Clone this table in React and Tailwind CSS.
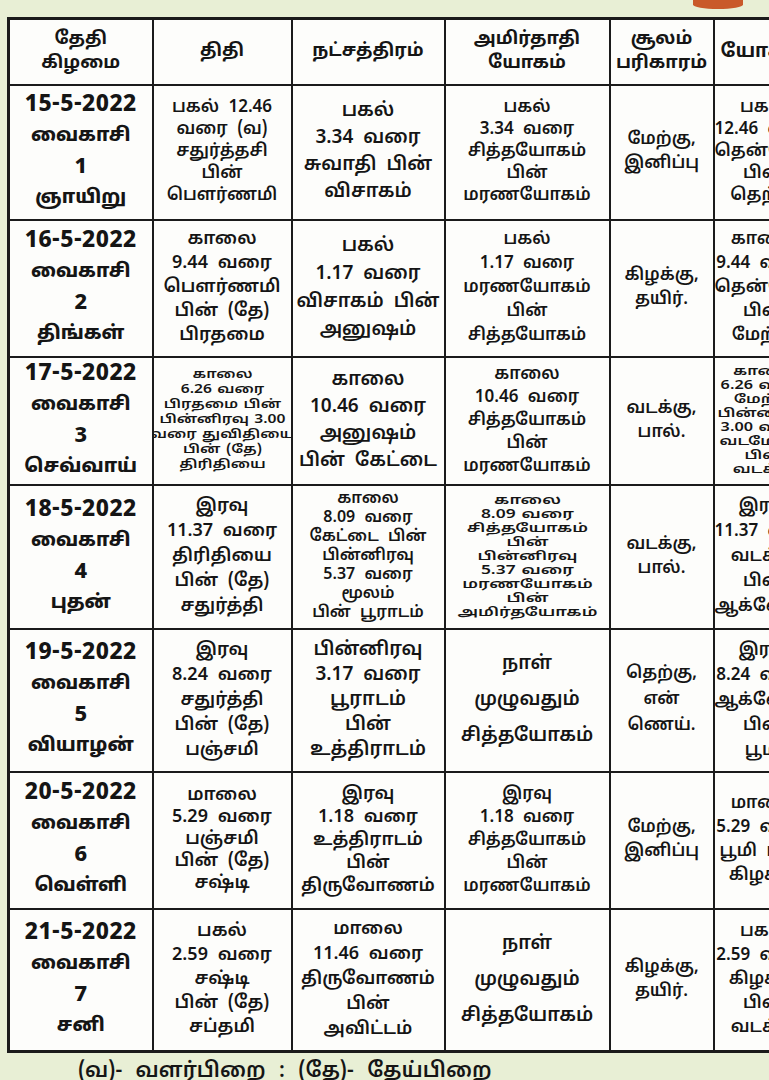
import React from "react";

const font = {
  fontFamily: '"Noto Sans Tamil", "Lohit Tamil", "Liberation Sans Narrow", "Liberation Sans", sans-serif',
};

// each cell: [lines, size class, stretch class]
const rows = [
  {
    h: "h-[135px]",
    date: ["15-5-2022", "வைகாசி", "1", "ஞாயிறு"],
    cells: [
      [["பகல் 12.46", "வரை (வ)", "சதுர்த்தசி", "பின்", "பௌர்ணமி"], "text-[17px] leading-[22px]"],
      [["பகல்", "3.34 வரை", "சுவாதி பின்", "விசாகம்"], "text-[19px] leading-[27px]"],
      [["பகல்", "3.34 வரை", "சித்தயோகம்", "பின்", "மரணயோகம்"], "text-[17px] leading-[22px]"],
      [["மேற்கு,", "இனிப்பு"], "text-[17px] leading-[24px]"],
      [["பகல்", "12.46 வரை", "தென்மேற்கு", "பின்", "தெற்கு"], "text-[17px] leading-[22px]"],
    ],
  },
  {
    h: "h-[137px]",
    date: ["16-5-2022", "வைகாசி", "2", "திங்கள்"],
    cells: [
      [["காலை", "9.44 வரை", "பௌர்ணமி", "பின் (தே)", "பிரதமை"], "text-[18px] leading-[24px]"],
      [["பகல்", "1.17 வரை", "விசாகம் பின்", "அனுஷம்"], "text-[19px] leading-[28px]"],
      [["பகல்", "1.17 வரை", "மரணயோகம்", "பின்", "சித்தயோகம்"], "text-[17px] leading-[24px]"],
      [["கிழக்கு,", "தயிர்."], "text-[17px] leading-[24px]"],
      [["காலை", "9.44 வரை", "தென்மேற்கு", "பின்", "மேற்கு"], "text-[17px] leading-[24px]"],
    ],
  },
  {
    h: "h-[128px]",
    date: ["17-5-2022", "வைகாசி", "3", "செவ்வாய்"],
    cells: [
      [["காலை", "6.26 வரை", "பிரதமை பின்", "பின்னிரவு 3.00", "வரை துவிதியை", "பின் (தே)", "திரிதியை"], "text-[12px] leading-[15px]", "scale-x-[1.3]"],
      [["காலை", "10.46 வரை", "அனுஷம்", "பின் கேட்டை"], "text-[19px] leading-[27px]"],
      [["காலை", "10.46 வரை", "சித்தயோகம்", "பின்", "மரணயோகம்"], "text-[17px] leading-[23px]"],
      [["வடக்கு,", "பால்."], "text-[17px] leading-[24px]"],
      [["காலை", "6.26 வரை", "மேற்கு", "பின்னிரவு", "3.00 வரை", "வடமேற்கு", "பின்", "வடக்கு"], "text-[12px] leading-[14px]", "scale-x-[1.35]"],
    ],
  },
  {
    h: "h-[144px]",
    date: ["18-5-2022", "வைகாசி", "4", "புதன்"],
    cells: [
      [["இரவு", "11.37 வரை", "திரிதியை", "பின் (தே)", "சதுர்த்தி"], "text-[18px] leading-[25px]"],
      [["காலை", "8.09 வரை", "கேட்டை பின்", "பின்னிரவு", "5.37 வரை", "மூலம்", "பின் பூராடம்"], "text-[16px] leading-[19px]"],
      [["காலை", "8.09 வரை", "சித்தயோகம்", "பின்", "பின்னிரவு", "5.37 வரை", "மரணயோகம்", "பின்", "அமிர்தயோகம்"], "text-[12px] leading-[14px]", "scale-x-[1.45]"],
      [["வடக்கு,", "பால்."], "text-[17px] leading-[24px]"],
      [["இரவு", "11.37 வரை", "வடக்கு", "பின்", "ஆக்னேயம்"], "text-[17px] leading-[25px]"],
    ],
  },
  {
    h: "h-[143px]",
    date: ["19-5-2022", "வைகாசி", "5", "வியாழன்"],
    cells: [
      [["இரவு", "8.24 வரை", "சதுர்த்தி", "பின் (தே)", "பஞ்சமி"], "text-[18px] leading-[25px]"],
      [["பின்னிரவு", "3.17 வரை", "பூராடம்", "பின்", "உத்திராடம்"], "text-[19px] leading-[25px]"],
      [["நாள்", "முழுவதும்", "சித்தயோகம்"], "text-[19px] leading-[36px]"],
      [["தெற்கு,", "என்", "ணெய்."], "text-[17px] leading-[26px]"],
      [["இரவு", "8.24 வரை", "ஆக்னேயம்", "பின்", "பூமி"], "text-[17px] leading-[25px]"],
    ],
  },
  {
    h: "h-[137px]",
    date: ["20-5-2022", "வைகாசி", "6", "வெள்ளி"],
    cells: [
      [["மாலை", "5.29 வரை", "பஞ்சமி", "பின் (தே)", "சஷ்டி"], "text-[18px] leading-[22px]"],
      [["இரவு", "1.18 வரை", "உத்திராடம்", "பின்", "திருவோணம்"], "text-[18px] leading-[23px]"],
      [["இரவு", "1.18 வரை", "சித்தயோகம்", "பின்", "மரணயோகம்"], "text-[17px] leading-[23px]"],
      [["மேற்கு,", "இனிப்பு"], "text-[17px] leading-[24px]"],
      [["மாலை", "5.29 வரை", "பூமி பின்", "கிழக்கு"], "text-[17px] leading-[24px]"],
    ],
  },
  {
    h: "h-[143px]",
    date: ["21-5-2022", "வைகாசி", "7", "சனி"],
    cells: [
      [["பகல்", "2.59 வரை", "சஷ்டி", "பின் (தே)", "சப்தமி"], "text-[18px] leading-[24px]"],
      [["மாலை", "11.46 வரை", "திருவோணம்", "பின்", "அவிட்டம்"], "text-[18px] leading-[25px]"],
      [["நாள்", "முழுவதும்", "சித்தயோகம்"], "text-[19px] leading-[36px]"],
      [["கிழக்கு,", "தயிர்."], "text-[17px] leading-[24px]"],
      [["பகல்", "2.59 வரை", "கிழக்கு", "பின்", "வடக்கு"], "text-[17px] leading-[24px]"],
    ],
  },
];

const headers = [
  ["தேதி", "கிழமை"],
  ["திதி"],
  ["நட்சத்திரம்"],
  ["அமிர்தாதி", "யோகம்"],
  ["சூலம்", "பரிகாரம்"],
  ["யோகினி"],
];

function Lines({ lines }) {
  return lines.map((l, i) => (
    <div key={i} className="whitespace-nowrap">
      {l}
    </div>
  ));
}

export default function App() {
  return (
    <div className="w-[769px] h-[1080px] overflow-hidden bg-[#e8efd5] text-[#151515]" style={font}>
      <div className="flex justify-end pr-[26px] h-[17px]">
        <div className="w-[50px] h-[9px] rounded-b-[50%] bg-[#c9592a]" />
      </div>

      <div className="pl-[7px]">
        <table className="table-fixed border-collapse border-[3px] border-[#1b1b1b] bg-[#fdfdfb] w-[880px]">
          <colgroup>
            <col className="w-[144px]" />
            <col className="w-[139px]" />
            <col className="w-[153px]" />
            <col className="w-[165px]" />
            <col className="w-[104px]" />
            <col className="w-[175px]" />
          </colgroup>
          <thead>
            <tr className="h-[66px]">
              {headers.map((h, i) => (
                <th
                  key={i}
                  className={
                    "border-2 border-[#1b1b1b] p-0 font-bold align-middle " +
                    (i === 5 ? "text-left pl-[6px] text-[19px] leading-[24px]" : "text-center text-[18px] leading-[24px]")
                  }
                >
                  <Lines lines={h} />
                </th>
              ))}
            </tr>
          </thead>
          <tbody>
            {rows.map((r, ri) => (
              <tr key={ri} className={r.h}>
                <td className="border-2 border-[#1b1b1b] p-0 text-center align-middle font-extrabold text-[19px] leading-[31px]">
                  <div className="text-[23px] tracking-[0.5px]">{r.date[0]}</div>
                  <div>{r.date[1]}</div>
                  <div className="text-[22px]">{r.date[2]}</div>
                  <div>{r.date[3]}</div>
                </td>
                {r.cells.map(([lines, size, stretch], ci) => (
                  <td
                    key={ci}
                    className={
                      "border-2 border-[#1b1b1b] p-0 align-middle font-semibold overflow-hidden text-center [word-spacing:5px] " +
                      size
                    }
                  >
                    <div className={(ci === 4 ? "w-[98px] " : "") + (stretch ? stretch + " [word-spacing:1px]" : "")}>
                      <Lines lines={lines} />
                    </div>
                  </td>
                ))}
              </tr>
            ))}
          </tbody>
        </table>
      </div>

      <div className="pl-[78px] pt-[7px] text-[21px] leading-[24px] font-semibold whitespace-nowrap [word-spacing:8px]">
        (வ)- வளர்பிறை : (தே)- தேய்பிறை
      </div>
    </div>
  );
}
